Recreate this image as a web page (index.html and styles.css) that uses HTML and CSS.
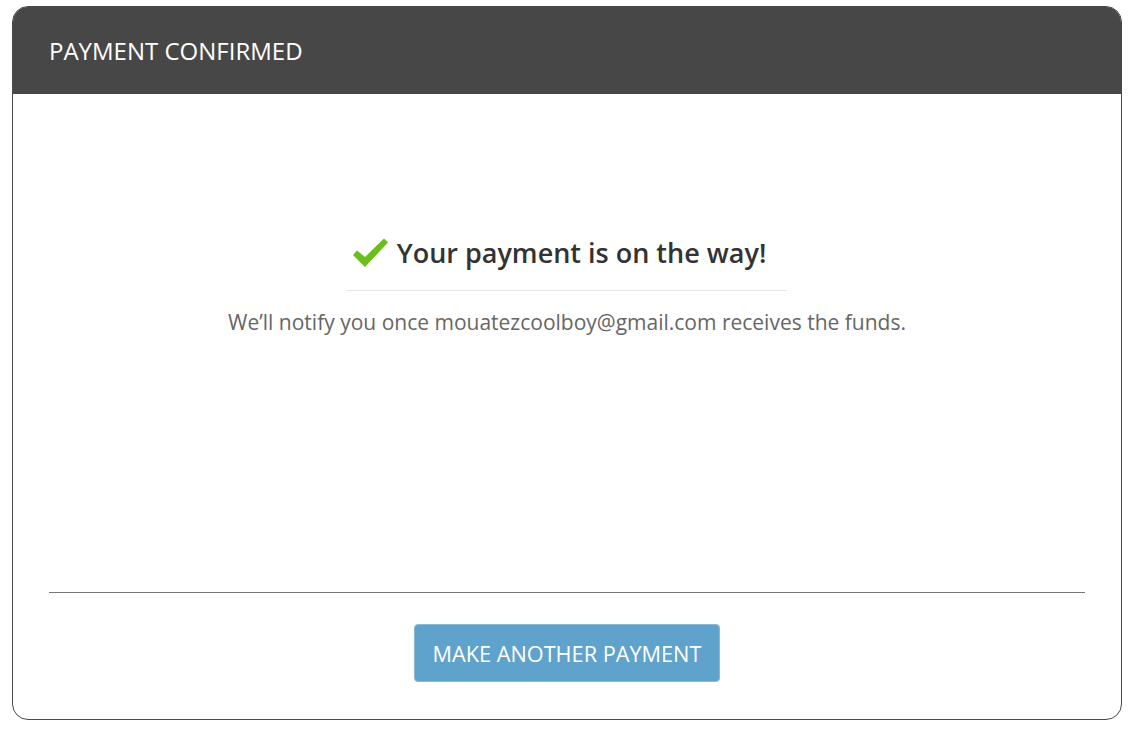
FILE: index.html
```html
<!DOCTYPE html>
<html>
<head>
<meta charset="utf-8">
<link rel="stylesheet" href="styles.css">
</head>
<body>
<div class="page">
  <div class="card">
    <div class="card-header">PAYMENT CONFIRMED</div>
    <div class="card-body">
      <div class="confirm">
        <h2 class="confirm-title">
          <svg class="check" width="37" height="31" viewBox="0 0 37 31"><path d="M1 18 L5 13.5 L13 20 L32 1.5 L36 5.5 L13 30 Z" fill="#6cbf1a"/></svg>
          <span>Your payment is on the way!</span>
        </h2>
        <p class="confirm-text">We’ll notify you once mouatezcoolboy@gmail.com receives the funds.</p>
      </div>
    </div>
    <div class="card-footer">
      <button class="btn">MAKE ANOTHER PAYMENT</button>
    </div>
  </div>
</div>
</body>
</html>
```
FILE: styles.css
```css
html, body {
  margin: 0;
  padding: 0;
  background: #ffffff;
  font-family: "Open Sans", "Liberation Sans", sans-serif;
}
.page {
  padding: 6px 9px 0 12px;
}
.card {
  box-sizing: border-box;
  height: 714px;
  border: 1px solid #4a4a4a;
  border-radius: 16px;
  overflow: hidden;
  display: flex;
  flex-direction: column;
  background: #fff;
}
.card-header {
  height: 87px;
  background: #474747;
  color: #fff;
  font-size: 24px;
  display: flex;
  align-items: center;
  margin: -1px -1px 0 -1px;
  padding-top: 1px;
  padding-left: 37px;
}
.card-body {
  flex: 1;
  display: flex;
  justify-content: center;
  padding-top: 141px;
}
.confirm {
  width: 440px;
  text-align: center;
}
.confirm-title {
  margin: 0;
  font-size: 27px;
  font-weight: 600;
  color: #333;
  line-height: 36px;
  padding-bottom: 19px;
  padding-right: 16px;
  border-bottom: 1px solid #e6e6e6;
  display: flex;
  align-items: center;
  justify-content: center;
  gap: 8px;
}
.check {
  display: block;
  margin-top: -2px;
}
.confirm-text {
  margin: 17px -200px 0;
  font-size: 21px;
  line-height: 28px;
  color: #666;
}
.card-footer {
  margin: 0 36px;
  border-top: 1px solid #777;
  padding: 31px 0 37px;
  display: flex;
  justify-content: center;
}
.btn {
  width: 306px;
  height: 58px;
  background: #5fa3cc;
  border: 1px solid #8db8d4;
  border-radius: 4px;
  color: #fff;
  font-family: "Open Sans", "Liberation Sans", sans-serif;
  font-size: 21.7px;
  padding: 0;
}
```
